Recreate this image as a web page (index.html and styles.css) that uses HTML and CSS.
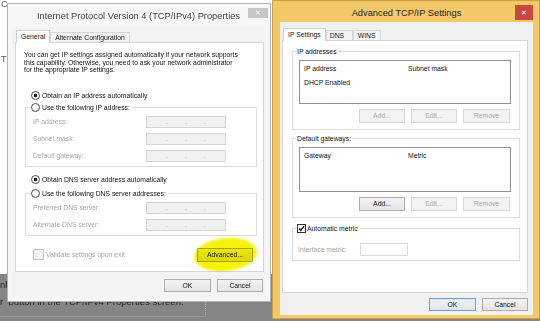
FILE: index.html
```html
<!DOCTYPE html>
<html lang="en">
<head>
  <meta charset="UTF-8">
  <meta name="viewport" content="width=device-width, initial-scale=1.0">
  <title>Advanced TCP/IP Settings</title>
  <link rel="stylesheet" href="styles.css">
</head>
<body>
  <div class="desktop">
    <!-- page behind the dialogs -->
    <div class="backdrop">
      <div class="doc">
        <div>C</div>
        <div class="doc-t">T</div>
      </div>
      <div class="doc-gray">
        <div class="doc-nk">nk</div>
        <div class="caption">r&nbsp; button in the TCP/IPv4 Properties screen.</div>
      </div>
    </div>

    <!-- IPv4 properties (inactive) -->
    <div class="window ipv4">
      <div class="titlebar">
        <span></span>
        <span class="title">Internet Protocol Version 4 (TCP/IPv4) Properties</span>
        <span class="close">&#x2715;</span>
      </div>
      <div class="client">
        <div class="tabs">
          <span class="tab current">General</span>
          <span class="tab">Alternate Configuration</span>
        </div>
        <div class="panel general">
          <p class="intro">You can get IP settings assigned automatically if your network supports<br>this capability. Otherwise, you need to ask your network administrator<br>for the appropriate IP settings.</p>

          <div class="radio on auto-ip">Obtain an IP address automatically</div>
          <fieldset class="group">
            <legend><span class="radio">Use the following IP address:</span></legend>
            <div class="field"><span>IP address:</span><span class="ipbox"><i>.</i><i>.</i><i>.</i></span></div>
            <div class="field"><span>Subnet mask:</span><span class="ipbox"><i>.</i><i>.</i><i>.</i></span></div>
            <div class="field"><span>Default gateway:</span><span class="ipbox"><i>.</i><i>.</i><i>.</i></span></div>
          </fieldset>

          <div class="radio on auto-dns">Obtain DNS server address automatically</div>
          <fieldset class="group dns-group">
            <legend><span class="radio">Use the following DNS server addresses:</span></legend>
            <div class="field"><span>Preferred DNS server:</span><span class="ipbox"><i>.</i><i>.</i><i>.</i></span></div>
            <div class="field"><span>Alternate DNS server:</span><span class="ipbox"><i>.</i><i>.</i><i>.</i></span></div>
          </fieldset>

          <div class="panel-foot">
            <span class="check">Validate settings upon exit</span>
            <button class="btn advanced-btn">Advanced...</button>
            <span class="highlight"></span>
          </div>
        </div>
        <div class="buttons">
          <button class="btn">OK</button>
          <button class="btn">Cancel</button>
        </div>
      </div>
    </div>

    <!-- Advanced TCP/IP settings (active) -->
    <div class="window advanced">
      <div class="titlebar">
        <span></span>
        <span class="title">Advanced TCP/IP Settings</span>
        <span class="close">&#x2715;</span>
      </div>
      <div class="client">
        <div class="tabs">
          <span class="tab current">IP Settings</span>
          <span class="tab tab-dns">DNS</span>
          <span class="tab">WINS</span>
        </div>
        <div class="panel ipsettings">
          <fieldset class="box">
            <legend>IP addresses</legend>
            <div class="listbox">
              <div class="cols"><span>IP address</span><span>Subnet mask</span></div>
              <div class="cols"><span>DHCP Enabled</span></div>
            </div>
            <div class="row-buttons">
              <button class="btn" disabled>Add...</button>
              <button class="btn" disabled>Edit...</button>
              <button class="btn" disabled>Remove</button>
            </div>
          </fieldset>

          <fieldset class="box gateways">
            <legend>Default gateways:</legend>
            <div class="listbox">
              <div class="cols"><span>Gateway</span><span>Metric</span></div>
            </div>
            <div class="row-buttons">
              <button class="btn">Add...</button>
              <button class="btn" disabled>Edit...</button>
              <button class="btn" disabled>Remove</button>
            </div>
          </fieldset>

          <fieldset class="box metric">
            <legend>
              <span class="checked">
                <svg width="8" height="8" viewBox="0 0 8 8"><path d="M1.2 4.1 L3.1 6.1 L6.9 1.5" fill="none" stroke="#111" stroke-width="1.6"/></svg>
                Automatic metric
              </span>
            </legend>
            <div class="metric-row">
              <span>Interface metric:</span>
              <span class="textbox"></span>
            </div>
          </fieldset>
        </div>
        <div class="buttons">
          <button class="btn default">OK</button>
          <button class="btn">Cancel</button>
        </div>
      </div>
    </div>
  </div>
</body>
</html>
```

FILE: styles.css
```css
* {
  box-sizing: border-box;
}
body {
  margin: 0;
  font-family: "Liberation Sans", Arial, sans-serif;
  font-size: 6.8px;
  color: #141414;
}
button {
  font: inherit;
}
.desktop {
  position: relative;
  width: 540px;
  height: 321px;
  overflow: hidden;
  background: #fff;
}

/* page behind */
.backdrop {
  display: flex;
  flex-direction: column;
  height: 100%;
}
.doc {
  height: 274px;
  padding-left: 1px;
  font-size: 9px;
  line-height: 9px;
  color: #555;
}
.doc-t {
  margin-top: 46px;
}
.doc-gray {
  flex: 1;
  background: #858585;
  color: #262626;
  font-size: 9.5px;
}
.doc-nk {
  padding-top: 6px;
  line-height: 10px;
}
.caption {
  width: 206px;
  height: 20px;
  margin-top: 7px;
  line-height: 10px;
  border-right: 1px dotted #b5b5b5;
  border-bottom: 1px solid #9a9a9a;
}

/* windows */
.window {
  position: absolute;
  display: flex;
  flex-direction: column;
  border: 1px solid;
}
.ipv4 {
  left: 7px;
  top: 3px;
  width: 264px;
  height: 299px;
  padding: 0 5px 4px 4px;
  background: #f6f6f6;
  border-color: #b4b4b4;
}
.advanced {
  left: 272px;
  top: 0;
  width: 268px;
  height: 319px;
  padding: 0 6px 3px 7px;
  background: #f2c869;
  border-color: #cfa040;
}
.titlebar {
  display: grid;
  grid-template-columns: 1fr auto 1fr;
  align-items: start;
}
.ipv4 .titlebar {
  height: 23px;
}
.advanced .titlebar {
  height: 21px;
}
.title {
  font-size: 9.3px;
  white-space: nowrap;
}
.ipv4 .title {
  margin-top: 7px;
  color: #444;
}
.advanced .title {
  margin-top: 7px;
  color: #262626;
}
.close {
  justify-self: end;
  display: flex;
  align-items: center;
  justify-content: center;
  color: #fff;
  font-size: 7px;
  font-family: "DejaVu Sans", sans-serif;
}
.ipv4 .close {
  width: 20px;
  height: 10px;
  margin: 4px -3px 0 0;
  background: #c6c6c6;
}
.advanced .close {
  width: 18px;
  height: 15px;
  margin-top: 4px;
  background: #c9473d;
}

.client {
  flex: 1;
  display: flex;
  flex-direction: column;
  background: #f0f0f0;
}
.ipv4 .client {
  padding: 3px 1px 0 3px;
  background: #f3f3f3;
}
.advanced .client {
  padding: 6px 5px 0 2px;
}

/* tabs */
.tabs {
  display: flex;
  align-items: flex-end;
  height: 12px;
  padding-left: 1px;
}
.tab {
  height: 10px;
  padding: 0 4px;
  line-height: 9px;
  border: 1px solid #d6d6d6;
  border-bottom: none;
  background: #f4f4f4;
  white-space: nowrap;
}
.tab.current {
  position: relative;
  z-index: 1;
  height: 13px;
  margin-bottom: -1px;
  line-height: 11px;
  background: #fff;
  border-color: #d0d0d0;
}
.tab-dns {
  min-width: 27px;
  padding-left: 3px;
}
.panel {
  background: #fff;
  border: 1px solid #d6d6d6;
}

/* general tab */
.general {
  height: 230px;
  padding: 8px 6px 0 8px;
}
.intro {
  margin: 0;
  line-height: 7.5px;
}
.radio {
  display: flex;
  align-items: center;
  gap: 2px;
  height: 9px;
  white-space: nowrap;
}
.radio::before {
  content: "";
  flex: none;
  width: 7px;
  height: 7px;
  border: 1px solid #4a4a4a;
  border-radius: 50%;
  background: #fff;
}
.radio.on::before {
  background: radial-gradient(circle, #1c1c1c 0 1.5px, #fff 2.1px);
}
.auto-ip {
  margin: 17px 0 0 7px;
}
.auto-dns {
  margin: 8px 0 0 7px;
}
.group {
  margin: 3px 0 0 1px;
  padding: 4px 6px 4px 5px;
  border: 1px solid #dedede;
  min-width: 0;
}
.group legend {
  padding: 0 1px 0 0;
}
.dns-group {
  margin-top: 5px;
}
.field {
  display: grid;
  grid-template-columns: 113px 80px;
  align-items: center;
  height: 12px;
  margin-left: 2px;
  color: #a6a6a6;
}
.field + .field {
  margin-top: 5px;
}
.ipbox {
  display: flex;
  gap: 17px;
  height: 12px;
  padding-left: 19px;
  line-height: 10px;
  border: 1px solid #d5d5d5;
  background: #f0f0f0;
}
.ipbox i {
  font-style: normal;
  color: #a0a0a0;
}
.panel-foot {
  position: relative;
  display: flex;
  align-items: center;
  justify-content: space-between;
  height: 14px;
  margin: 12px 4px 0 9px;
}
.check {
  display: flex;
  align-items: center;
  gap: 2px;
  color: #a6a6a6;
}
.check::before {
  content: "";
  width: 9px;
  height: 9px;
  border: 1px solid #c3c3c3;
  background: #f2f2f2;
}
.highlight {
  position: absolute;
  right: -4px;
  top: -10px;
  width: 63px;
  height: 33px;
  border-radius: 50%;
  background: #f7f20c;
  mix-blend-mode: multiply;
  transform: rotate(-6deg);
  filter: blur(1px);
  pointer-events: none;
}

/* buttons */
.btn {
  width: 46px;
  height: 14px;
  padding: 0;
  line-height: 12px;
  color: #141414;
  border: 1px solid #acacac;
  background: linear-gradient(#f3f3f3, #e4e4e4);
}
.btn:disabled {
  color: #a8a8a8;
  border-color: #dadada;
  background: #f3f3f3;
}
.btn.default {
  border-color: #6da4d9;
  box-shadow: inset 0 0 0 1px #d4e6f6;
}
.advanced-btn {
  width: 56px;
}
.buttons {
  display: flex;
  justify-content: flex-end;
  gap: 6px;
}
.buttons .btn {
  height: 13px;
  line-height: 11px;
}
.buttons .btn:first-child {
  width: 47px;
}
.ipv4 .buttons {
  margin-top: 7px;
  padding-right: 1px;
}
.advanced .buttons {
  margin-top: 5px;
}

/* IP settings tab */
.ipsettings {
  height: 253px;
  padding: 7px 7px 0 9px;
}
.box {
  margin: 0;
  padding: 5px 8px 6px 3px;
  border: 1px solid #dcdcdc;
  min-width: 0;
}
.box legend {
  padding: 0 1px;
}
.gateways {
  margin-top: 5px;
}
.metric {
  margin-top: 6px;
  padding-bottom: 4px;
}
.listbox {
  height: 44px;
  margin-left: 3px;
  padding: 4px;
  border: 1px solid #8f9294;
  background: #fff;
}
.gateways .listbox {
  height: 45px;
}
.cols {
  display: grid;
  grid-template-columns: 104px auto;
  line-height: 8px;
}
.cols + .cols {
  margin-top: 6px;
}
.row-buttons {
  display: flex;
  justify-content: flex-end;
  gap: 6px;
  margin-top: 5px;
  padding-right: 1px;
}
.row-buttons .btn:last-child {
  width: 47px;
}
.checked {
  display: flex;
  align-items: center;
  gap: 1px;
}
.checked svg {
  border: 1px solid #333;
  background: #fff;
  width: 9px;
  height: 9px;
}
.metric-row {
  display: grid;
  grid-template-columns: 62px 48px;
  align-items: center;
  margin: 5px 0 0 2px;
  color: #a6a6a6;
}
.textbox {
  height: 13px;
  border: 1px solid #dcdcdc;
  background: #fff;
}
```
